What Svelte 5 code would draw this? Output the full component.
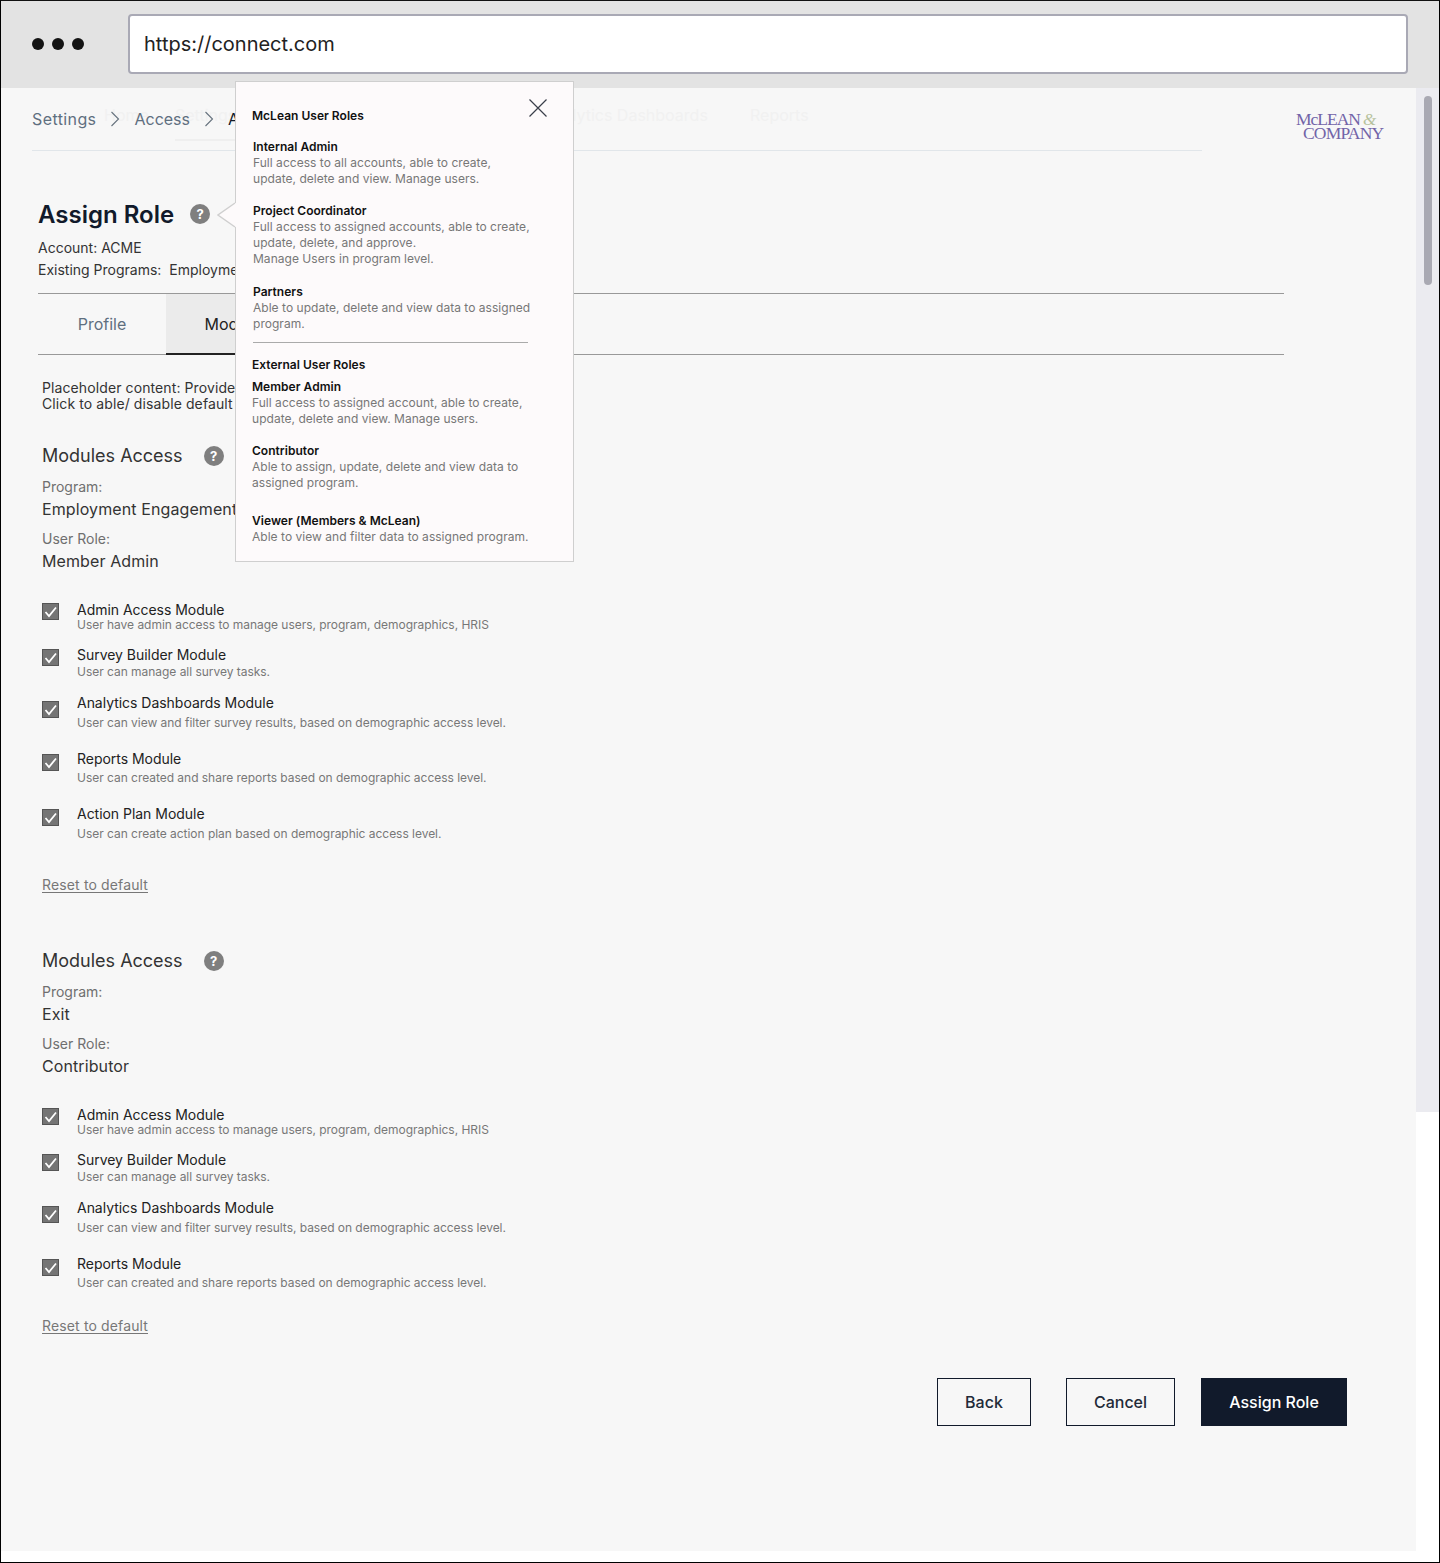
<script>
  const modules = [
    { t: 'Admin Access Module', d: 'User have admin access to manage users, program, demographics, HRIS' },
    { t: 'Survey Builder Module', d: 'User can manage all survey tasks.' },
    { t: 'Analytics Dashboards Module', d: 'User can view and filter survey results, based on demographic access level.' },
    { t: 'Reports Module', d: 'User can created and share reports based on demographic access level.' },
    { t: 'Action Plan Module', d: 'User can create action plan based on demographic access level.' }
  ];
  const sections = [
    { program: 'Employment Engagement', role: 'Member Admin', mods: modules, cls: 'first' },
    { program: 'Exit', role: 'Contributor', mods: modules.slice(0, 4), cls: 'second' }
  ];
  const internal = [
    { t: 'Internal Admin', cls: 'ia', lines: ['Full access to all accounts, able to create,', 'update, delete and view. Manage users.'] },
    { t: 'Project Coordinator', cls: 'pc', lines: ['Full access to assigned accounts, able to create,', 'update, delete, and approve.', 'Manage Users in program level.'] },
    { t: 'Partners', cls: 'pa', lines: ['Able to update, delete and view data to assigned', 'program.'] }
  ];
  const external = [
    { t: 'Member Admin', cls: 'ma', lines: ['Full access to assigned account, able to create,', 'update, delete and view. Manage users.'] },
    { t: 'Contributor', cls: 'co', lines: ['Able to assign, update, delete and view data to', 'assigned program.'] },
    { t: 'Viewer (Members & McLean)', cls: 'vi', lines: ['Able to view and filter data to assigned program.'] }
  ];
</script>

{#snippet help()}
  <span class="help">?</span>
{/snippet}

{#snippet chevron()}
  <svg class="chev" width="10" height="16" viewBox="0 0 10 16" fill="none"><path d="M1.5 1 L8.5 8 L1.5 15" stroke="#66727e" stroke-width="1.1"/></svg>
{/snippet}

{#snippet role(r)}
  <div class="role {r.cls}">
    <div class="role-t">{r.t}</div>
    {#each r.lines as l}<div class="role-l">{l}</div>{/each}
  </div>
{/snippet}

<div class="frame">
  <header class="chrome">
    <div class="dots"><i></i><i></i><i></i></div>
    <div class="url">https://connect.com</div>
  </header>

  <div class="body">
    <main class="main">
      <nav class="crumbs">
        <span class="ghost g1">Home</span>
        <span class="ghost g2">Settings</span>
        <span class="ghost g3">Analytics Dashboards</span>
        <span class="ghost g4">Reports</span>
        <span class="crumb wide">Settings</span>
        {@render chevron()}
        <span class="crumb">Access</span>
        {@render chevron()}
        <span class="crumb cur">Assign Role</span>
      </nav>
      <div class="logo" aria-label="McLean & Company">
        <div class="l1">McLEAN<em>&amp;</em></div>
        <div class="l2">COMPANY</div>
      </div>

      <div class="head">
        <div class="title-row"><h1>Assign Role</h1>{@render help()}</div>
        <p class="acct">Account: ACME</p>
        <p class="prog">Existing Programs:&nbsp; Employment Engagement, Exit</p>
      </div>

      <div class="tabs">
        <div class="tab">Profile</div>
        <div class="tab on">Modules</div>
      </div>

      <div class="content">
        <p class="ph">Placeholder content: Provide module access<br />Click to able/ disable default modules</p>

        {#each sections as s}
          <section class="sec {s.cls}">
            <div class="sec-head"><h2>Modules Access</h2>{@render help()}</div>
            <div class="lab l-prog">Program:</div>
            <div class="val">{s.program}</div>
            <div class="lab l-role">User Role:</div>
            <div class="val">{s.role}</div>
            <div class="mods">
              {#each s.mods as m, i}
                <div class="mod r{i + 1}">
                  <span class="check">
                    <svg width="15" height="15" viewBox="0 0 15 15" fill="none"><path d="M2.5 8 L6 12 L13 3.5" stroke="#fff" stroke-width="1.8"/></svg>
                  </span>
                  <div class="mod-text">
                    <div class="mod-t">{m.t}</div>
                    <div class="mod-d">{m.d}</div>
                  </div>
                </div>
              {/each}
            </div>
            <span class="reset">Reset to default</span>
          </section>
        {/each}
      </div>

      <div class="actions">
        <button class="btn b-back">Back</button>
        <button class="btn b-cancel">Cancel</button>
        <button class="btn primary">Assign Role</button>
      </div>
    </main>
    <aside class="track"><div class="thumb"></div></aside>
  </div>

  <div class="pop">
    <svg class="arrow" width="20" height="26" viewBox="0 0 20 26"><path d="M18 1 L1 13 L18 25 H20 V1 Z" fill="#fdfafb"/><path d="M18 1 L1 13 L18 25" fill="none" stroke="#cfcfcf" stroke-width="1.4"/></svg>
    <svg class="close" width="20" height="20" viewBox="0 0 20 20" fill="none"><path d="M1.5 1.5 L18.5 18.5 M18.5 1.5 L1.5 18.5" stroke="#3a3f4a" stroke-width="1.2"/></svg>
    <div class="pop-h h1">McLean User Roles</div>
    {#each internal as r}{@render role(r)}{/each}
    <hr />
    <div class="pop-h h2">External User Roles</div>
    {#each external as r}{@render role(r)}{/each}
  </div>
</div>

<style>
  :global(body) { margin: 0; background: #fff; }
  .frame {
    position: relative; width: 1440px; height: 1563px; background: #fff; overflow: hidden;
    font-family: Inter, "Noto Sans", sans-serif; color: #333;
  }
  .frame::after {
    content: ""; position: absolute; inset: 0; border: 1px solid #000; border-top-color: #111; pointer-events: none; z-index: 10;
  }
  .chrome { height: 88px; background: #e3e3e3; display: flex; align-items: center; padding: 0 32px; box-sizing: border-box; }
  .dots { display: flex; gap: 8px; width: 96px; }
  .dots i { width: 12px; height: 12px; border-radius: 50%; background: #141414; display: block; }
  .url {
    width: 1280px; height: 60px; box-sizing: border-box; background: #fff; border: 2px solid #a9a9b5; border-radius: 4px;
    display: flex; align-items: center; padding-left: 14px; font-size: 20px; color: #222; margin-top: 0;
  }
  .body { display: flex; align-items: flex-start; }
  .main { position: relative; width: 1416px; height: 1463px; background: #f7f7f7; box-sizing: border-box; }

  .crumbs {
    position: relative; margin-left: 32px; width: 1170px; height: 62px; border-bottom: 1px solid #e1e6ea;
    display: flex; align-items: center; gap: 14px; font-size: 16px; box-sizing: content-box;
  }
  .crumb { color: #5f6f7f; position: relative; z-index: 1; }
  .crumb.wide { letter-spacing: 0.4px; }
  .crumb.cur { color: #111a2b; }
  .chev { flex: none; position: relative; z-index: 1; }
  .ghost { position: absolute; top: 17px; color: #f1f1f1; font-size: 16px; }
  .g1 { left: 72px; }
  .g2 { left: 143px; padding-bottom: 14px; border-bottom: 2px solid #efefef; width: 100px; }
  .g3 { left: 511px; }
  .g4 { left: 718px; }

  .logo {
    position: absolute; left: 1296px; top: 24px; font-family: "Liberation Serif", serif; font-size: 17.5px; line-height: 14px;
    color: #7264a8; white-space: nowrap;
  }
  .l1 { letter-spacing: -1px; }
  .logo em { color: #b6c29c; font-size: 17px; margin-left: 3px; letter-spacing: 0; }
  .l2 { margin-left: 7px; margin-top: -1px; letter-spacing: -0.8px; }

  .head { margin: 48px 0 0 38px; }
  .title-row { display: flex; align-items: center; gap: 16px; height: 30px; }
  h1 { margin: 0; padding-top: 2px; font-size: 24px; line-height: 30px; font-weight: 600; color: #111a2b; }
  .help {
    width: 20px; height: 20px; border-radius: 50%; background: #7f7f7f; color: #fff; font-size: 13px; font-weight: 700;
    display: flex; align-items: center; justify-content: center; line-height: 1; flex: none;
  }
  .acct, .prog { margin: 0; font-size: 14px; line-height: 20px; color: #333; white-space: nowrap; }
  .acct { margin-top: 9px; }
  .prog { margin-top: 2px; }

  .tabs {
    margin: 13px 0 0 38px; width: 1246px; height: 60px; border-top: 1px solid #999; border-bottom: 1px solid #999; display: flex;
  }
  .tab { width: 128px; height: 60px; display: flex; align-items: center; justify-content: center; font-size: 16px; color: #5f6f7f; box-sizing: border-box; }
  .tab.on { width: 142px; background: #ebebeb; color: #222; height: 61px; border-bottom: 2px solid #222; }

  .content { margin-left: 42px; }
  .ph { margin: 25px 0 0; font-size: 14px; line-height: 16px; color: #333; letter-spacing: 0.1px; }
  .sec.first { margin-top: 32px; }
  .sec.second { margin-top: 55px; }
  .sec-head { display: flex; align-items: center; gap: 21px; height: 24px; }
  h2 { margin: 0; font-size: 18px; line-height: 24px; font-weight: 400; color: #333; }
  .lab { font-size: 14px; line-height: 16px; color: #6f6f6f; }
  .l-prog { margin-top: 11px; }
  .l-role { margin-top: 12px; }
  .val { font-size: 16px; line-height: 20px; margin-top: 4px; color: #333; letter-spacing: 0.1px; }
  .mods { margin-top: 31px; }
  .mod { display: flex; align-items: flex-start; gap: 18px; }
  .check {
    width: 17px; height: 17px; box-sizing: border-box; background: #757575; border: 1px solid #555; display: flex; align-items: center; justify-content: center; flex: none;
    margin-top: var(--ct);
  }
  .mod-t { font-size: 14px; line-height: 16px; color: #222; letter-spacing: -0.03px; }
  .mod-d { font-size: 12px; line-height: 16px; color: #777; margin-top: var(--dg); letter-spacing: -0.03px; }
  .r1 { --ct: 1px; --dg: -1px; margin-bottom: 14px; }
  .r2 { --ct: 2px; --dg: 1px; margin-bottom: 15px; }
  .r3 { --ct: 6px; --dg: 4px; margin-bottom: 20px; }
  .r4 { --ct: 3px; --dg: 3px; margin-bottom: 20px; }
  .r5 { --ct: 3px; --dg: 4px; margin-bottom: 0; }
  .reset {
    display: inline-block; font-size: 14px; line-height: 15px; color: #777; border-bottom: 1px solid #777; letter-spacing: 0.14px;
  }
  .first .reset { margin-top: 35px; }
  .second .reset { margin-top: 7px; }

  .actions { position: absolute; left: 937px; top: 1290px; display: flex; }
  .btn {
    height: 48px; box-sizing: border-box; background: transparent; border: 1px solid #111a2b; color: #222a38; font: 500 16px Inter, sans-serif; padding: 0; border-radius: 0;
  }
  .b-back { width: 94px; margin-right: 35px; }
  .b-cancel { width: 109px; margin-right: 26px; }
  .primary { width: 146px; background: #111a2b; color: #fff; }

  .track { width: 24px; height: 1024px; background: #ebebf0; position: relative; flex: none; }
  .thumb { position: absolute; left: 8px; top: 8px; width: 8px; height: 189px; border-radius: 4px; background: #a9a9b3; }

  .pop {
    position: absolute; z-index: 5; left: 235px; top: 81px; width: 339px; height: 481px; box-sizing: border-box; background: #fdfafb;
    border: 1px solid #cfcfcf;
  }
  .arrow { position: absolute; left: -19px; top: 120px; }
  .close { position: absolute; left: 292px; top: 16px; }
  .pop-h { position: absolute; left: 16px; font-size: 12px; line-height: 16px; font-weight: 600; color: #111; white-space: nowrap; letter-spacing: 0.02px; }
  .pop-h.h1 { top: 26px; }
  .pop-h.h2 { top: 275px; }
  .pop hr { position: absolute; left: 17px; top: 260px; width: 275px; margin: 0; border: 0; border-top: 1px solid #aaa; }
  .role { position: absolute; left: 16px; white-space: nowrap; }
  .role-t { font-size: 12px; line-height: 16px; font-weight: 600; color: #111; letter-spacing: 0.03px; }
  .role-l { font-size: 12px; line-height: 16px; color: #777; letter-spacing: 0.03px; }
  .ia { top: 57px; left: 17px; }
  .pc { top: 121px; left: 17px; }
  .pa { top: 202px; left: 17px; }
  .ma { top: 297px; }
  .co { top: 361px; }
  .vi { top: 431px; }
</style>
